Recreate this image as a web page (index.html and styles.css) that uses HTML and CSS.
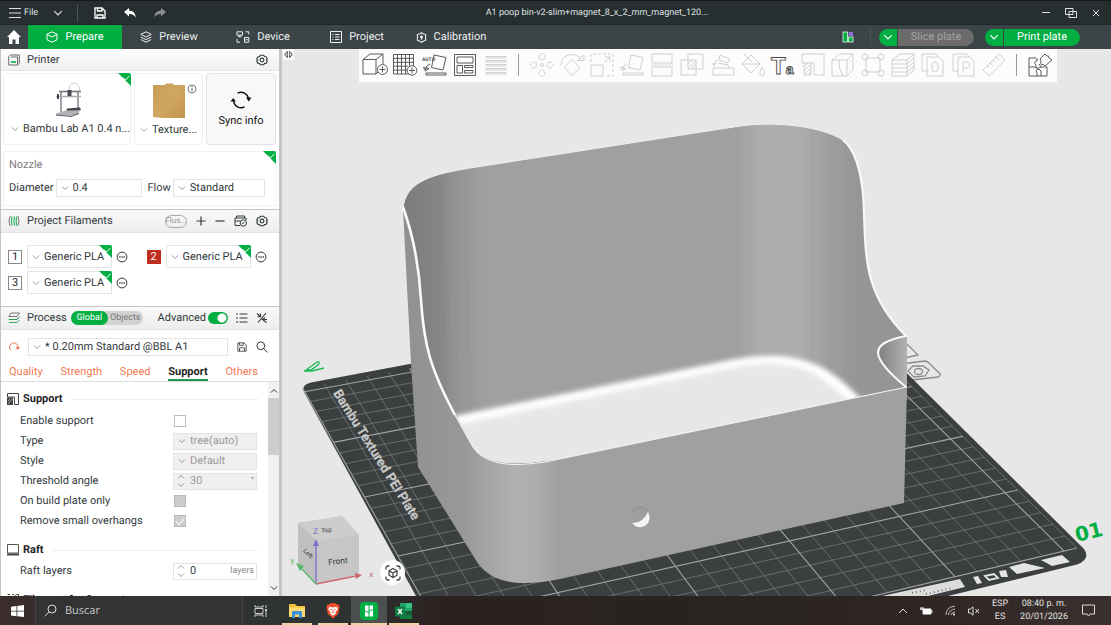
FILE: index.html
```html
<!DOCTYPE html>
<html lang="en">
<head>
<meta charset="utf-8">
<meta name="viewport" content="width=device-width, initial-scale=1">
<title>A1 poop bin</title>
<link rel="stylesheet" href="styles.css">
</head>
<body>
<svg class="defs" aria-hidden="true">
  <symbol id="chev" viewBox="0 0 8 8"><path d="M1 2.500L4 5.500 7 2.500" fill="none" stroke="currentColor"/></symbol>
  <symbol id="chev-up" viewBox="0 0 8 8"><path d="M1 5.500L4 2.500 7 5.500" fill="none" stroke="currentColor"/></symbol>
  <symbol id="gear" viewBox="0 0 12 12"><path d="M4.300 1.300h3.400l.8 1.300 1.600.2 1.200 2.300L10.400 6l.9 1.200-1.300 2.200-1.500.1-.8 1.300H4.300l-.8-1.300L2 9.400.7 7.200 1.600 6 .7 4.900 2 2.700l1.500-.1z" fill="none" stroke="currentColor" stroke-width="1.100"/><circle cx="6" cy="6" r="1.900" fill="none" stroke="currentColor" stroke-width="1.100"/></symbol>
  <symbol id="corner" viewBox="0 0 13 13"><path d="M0 0H11Q13 0 13 2V13Z" fill="#00ae42"/><path d="M5 4.500L7.500 7 11.500 2.800" fill="none" stroke="#fff"/></symbol>
  <symbol id="more" viewBox="0 0 12 12"><circle cx="6" cy="6" r="4.900" fill="none" stroke="currentColor"/><path d="M3.200 6h1.300M5.400 6h1.300M7.600 6h1.300" stroke="currentColor" stroke-width="1.300"/></symbol>
  <symbol id="save" viewBox="0 0 12 12"><path d="M1 1H8.500L11 3.500V11H1ZM3 1V4H7.500V1M3 11V7H9V11" fill="none" stroke="currentColor"/></symbol>
</svg>
<div class="app">
  <header class="titlebar">
    <div class="title-left">
      <button class="file-btn"><svg width="12" height="12" viewBox="0 0 12 12"><path d="M0 1.500H12M0 6H12M0 10.500H12" stroke="currentColor" stroke-width="1.200"/></svg>File</button>
      <button class="bare" aria-label="File menu"><svg width="10" height="10"><use href="#chev"/></svg></button>
      <span class="tsep"></span>
      <button class="bare" aria-label="Save"><svg width="12" height="12" viewBox="0 0 12 12"><path d="M1 1H8L11 4V11H1ZM3.500 1V4H8V1M3 11V8H9V11" fill="none" stroke="#fff" stroke-width="1.300"/></svg></button>
      <button class="bare" aria-label="Undo"><svg width="12" height="10" viewBox="0 0 12 10"><path d="M0 4L5 0V2.500Q11 2.500 12 9.500Q9 5.500 5 6V8.500Z" fill="#fff"/></svg></button>
      <button class="bare" aria-label="Redo"><svg width="12" height="10" viewBox="0 0 12 10"><path d="M12 4L7 0V2.500Q1 2.500 0 9.500Q3 5.500 7 6V8.500Z" fill="#8b9091"/></svg></button>
    </div>
    <div class="doc-title">A1 poop bin-v2-slim+magnet_8_x_2_mm_magnet_120...</div>
    <div class="title-right">
      <button class="bare" aria-label="Minimize"><svg width="8" height="8" viewBox="0 0 8 8"><path d="M0 3.500H8" stroke="currentColor"/></svg></button>
      <button class="bare" aria-label="Restore"><svg width="12" height="10" viewBox="0 0 12 10"><path d="M.5 .5H8V6.500H.5ZM4 3.500H11.500V9.500H4Z" fill="none" stroke="currentColor"/></svg></button>
      <button class="bare" aria-label="Close"><svg width="8" height="8" viewBox="0 0 8 8"><path d="M1 1L7 7M7 1L1 7" stroke="currentColor"/></svg></button>
    </div>
  </header>

  <nav class="tabs">
    <button class="home" aria-label="Home"><svg width="14" height="14" viewBox="0 0 14 14"><path d="M7 0L14 7H12V14H8.500V9.500H5.500V14H2V7H0Z" fill="#fff"/></svg></button>
    <button class="tab active"><svg width="12" height="12" viewBox="0 0 12 12"><path d="M6 .8L11 3.200V8.800L6 11.200 1 8.800V3.200ZM1 3.400L6 6 11 3.400" fill="none" stroke="currentColor"/></svg>Prepare</button>
    <button class="tab"><svg width="12" height="12" viewBox="0 0 12 12"><path d="M6 .8L11.200 3.400 6 6 .8 3.400ZM.8 6L6 8.600 11.200 6M.8 8.500L6 11.200 11.200 8.500" fill="none" stroke="currentColor"/></svg>Preview</button>
    <button class="tab"><svg width="14" height="12" viewBox="0 0 14 12"><path d="M1 .8H6.500V4.200H1ZM3.800 4.200V5.500M2 5.800H5.500M9.500 .8H12.800V3.500M1 8V11.200H4M8.500 6.500H12.800V11.200H8.500ZM9.500 8.800H11.800" fill="none" stroke="currentColor"/></svg>Device</button>
    <button class="tab"><svg width="12" height="12" viewBox="0 0 12 12"><path d="M.5 .5H11.500V11.500H.5ZM2.500 3.500H3.500M5 3.500H9.500M2.500 6H3.500M5 6H9.500M2.500 8.500H3.500M5 8.500H9.500" fill="none" stroke="currentColor"/></svg>Project</button>
    <button class="tab"><svg width="11" height="11" viewBox="0 0 12 12"><path d="M6 .8L7.800 1.900 10.500 2.800 10.400 6 10.500 9 7.800 10.100 6 11.200 4.200 10.100 1.500 9 1.600 6 1.500 2.800 4.200 1.900Z" fill="none" stroke="currentColor" stroke-width="1.200"/><path d="M6 8.500V4.500M4.500 6L6 4.300 7.500 6" fill="none" stroke="currentColor" stroke-width="1.400"/></svg>Calibration</button>
    <div class="tab-actions">
      <button class="bare" aria-label="Layout"><svg width="12" height="12" viewBox="0 0 12 12"><rect x="1" y="1" width="4.500" height="10" fill="#00ae42" stroke="#e9f5ee" stroke-width=".8"/><rect x="6.500" y="1" width="4.500" height="4" fill="#8f6fd0"/><rect x="6.500" y="6" width="4.500" height="5" fill="#00ae42" stroke="#e9f5ee" stroke-width=".8"/></svg></button>
      <span class="tsep"></span>
      <div class="pill"><button aria-label="Slice options"><svg width="10" height="10"><use href="#chev"/></svg></button><button class="wide off">Slice plate</button></div>
      <div class="pill"><button aria-label="Print options"><svg width="10" height="10"><use href="#chev"/></svg></button><button class="wide">Print plate</button></div>
    </div>
  </nav>

  <main class="work">
    <aside class="side">
      <section class="head">
        <svg width="12" height="12" viewBox="0 0 12 12"><path d="M.7 2.500L2.500 1H11.300V9.500L9.500 11H.7ZM3 3H9.500V10.500" fill="none" stroke="#6b6b6b"/><path d="M3 8H8" stroke="#00ae42" stroke-width="1.600"/></svg>
        <h2>Printer</h2>
        <button class="bare end" aria-label="Printer settings"><svg width="12" height="12"><use href="#gear"/></svg></button>
      </section>
      <div class="cards">
        <div class="card">
          <svg class="corner" width="13" height="13"><use href="#corner"/></svg>
          <svg class="thumb" width="30" height="36" viewBox="0 0 30 36"><path d="M15 8Q15 1 20 1T26 9" fill="none" stroke="#c4c4c4" stroke-width=".8"/><path d="M7 9V30M24 9V29" stroke="#a0a0a8" stroke-width="2"/><path d="M5 9.500H27" stroke="#77777e" stroke-width="1.600"/><path d="M2 14.500H27" stroke="#a8a8ae" stroke-width="1.500"/><path d="M13.500 8h4v6h-4zM3 12h2v5H3z" fill="#4a4b53"/><path d="M13 26.500L26 25.500 27 28 12 30Z" fill="#44444c"/><path d="M2 31.500L12 28.500H26L24 32 16 34 2 33.500Z" fill="#b2b2b9"/><path d="M2 33L17 34.500 25 31.500" fill="none" stroke="#66666e" stroke-width="1.200"/></svg>
          <label class="pick"><svg width="8" height="8"><use href="#chev"/></svg><select aria-label="Printer"><option>Bambu Lab A1 0.4 n...</option></select></label>
        </div>
        <div class="card plate">
          <svg class="info" width="10" height="10" viewBox="0 0 10 10"><circle cx="5" cy="5" r="4" fill="none" stroke="#555" stroke-width=".8"/><path d="M5 2.300V3.300M5 4.200V7.500" stroke="#555"/></svg>
          <svg class="thumb" width="32" height="36" viewBox="0 0 32 36"><defs><linearGradient id="pei" x2="1" y2="1"><stop stop-color="#c99d57"/><stop offset=".5" stop-color="#d0a661"/><stop offset="1" stop-color="#c2934c"/></linearGradient></defs><path d="M0 2H12L13 .5H20L21 2H32V35H10L0 34Z" fill="url(#pei)"/></svg>
          <label class="pick"><svg width="8" height="8"><use href="#chev"/></svg><select aria-label="Plate type"><option>Texture...</option></select></label>
        </div>
        <button class="sync"><svg width="22" height="20" viewBox="0 0 22 20"><path d="M3.500 11A7.600 7.600 0 0 0 14.500 16.800M7.500 3.200A7.600 7.600 0 0 1 18.500 9" fill="none" stroke="#111" stroke-width="1.400"/><path d="M.5 11.500L3.200 8 6 11.500ZM16 7.500L18.800 11.500 21.500 7.500Z" fill="#111"/></svg>Sync info</button>
      </div>
      <div class="nozzle">
        <svg class="corner" width="13" height="13"><use href="#corner"/></svg>
        <span class="muted">Nozzle</span>
        <div class="nozzle-row">
          <label for="dia">Diameter</label>
          <div class="pick box"><svg width="8" height="8"><use href="#chev"/></svg><select id="dia"><option>0.4</option></select></div>
          <label for="flow">Flow</label>
          <div class="pick box"><svg width="8" height="8"><use href="#chev"/></svg><select id="flow"><option>Standard</option></select></div>
        </div>
      </div>

      <section class="head ruled">
        <svg width="12" height="12" viewBox="0 0 12 12"><path d="M2 1Q0 6 2 11M10 1Q12 6 10 11" fill="none" stroke="#777"/><path d="M4 1.500Q3 6 4 10.500M6.500 1.500Q5.500 6 6.500 10.500M8.500 1.500Q8 6 8.500 10.500" fill="none" stroke="#36b566" stroke-width="1.200"/></svg>
        <h2>Project Filaments</h2>
        <div class="tools end">
          <button class="flush">Flus...</button>
          <button class="bare" aria-label="Add"><svg width="10" height="10" viewBox="0 0 10 10"><path d="M5 .5V9.500M.5 5H9.500" stroke="currentColor" stroke-width="1.200"/></svg></button>
          <button class="bare" aria-label="Remove"><svg width="10" height="10" viewBox="0 0 10 10"><path d="M.5 5H9.500" stroke="currentColor" stroke-width="1.200"/></svg></button>
          <button class="bare" aria-label="Sync filaments"><svg width="13" height="12" viewBox="0 0 13 12"><path d="M2.500 3V1H10.500V3M1 3H12V5M1 3V10.500H6M1 6H6" fill="none" stroke="currentColor"/><circle cx="9.300" cy="8" r="3.200" fill="none" stroke="currentColor"/><path d="M8 9L10.600 7" stroke="currentColor"/></svg></button>
          <button class="bare" aria-label="Filament settings"><svg width="12" height="12"><use href="#gear"/></svg></button>
        </div>
      </section>
      <div class="filaments">
        <div class="fil"><span class="num">1</span><div class="pick box"><svg width="8" height="8"><use href="#chev"/></svg><select aria-label="Filament 1"><option>Generic PLA</option></select><svg class="corner" width="13" height="13"><use href="#corner"/></svg></div><button class="bare" aria-label="More 1"><svg width="12" height="12"><use href="#more"/></svg></button></div>
        <div class="fil"><span class="num red">2</span><div class="pick box"><svg width="8" height="8"><use href="#chev"/></svg><select aria-label="Filament 2"><option>Generic PLA</option></select><svg class="corner" width="13" height="13"><use href="#corner"/></svg></div><button class="bare" aria-label="More 2"><svg width="12" height="12"><use href="#more"/></svg></button></div>
        <div class="fil"><span class="num">3</span><div class="pick box"><svg width="8" height="8"><use href="#chev"/></svg><select aria-label="Filament 3"><option>Generic PLA</option></select><svg class="corner" width="13" height="13"><use href="#corner"/></svg></div><button class="bare" aria-label="More 3"><svg width="12" height="12"><use href="#more"/></svg></button></div>
      </div>

      <section class="head ruled">
        <svg width="12" height="12" viewBox="0 0 12 12"><path d="M3 1H11.500L9 4.500H.8ZM1.500 7.500H9L11.500 4.500" fill="none" stroke="#666" stroke-width=".9"/><path d="M.8 7.500H9L11 5.500M.8 10.500H9L11.300 8" fill="none" stroke="#1fa552" stroke-width=".9"/></svg>
        <h2>Process</h2>
        <div class="scope"><button class="on">Global</button><button>Objects</button></div>
        <div class="adv end">
          <label for="adv">Advanced</label><input type="checkbox" id="adv" class="switch" checked>
          <button class="bare" aria-label="List"><svg width="12" height="10" viewBox="0 0 12 10"><path d="M0 1H2M3.500 1H11.500M0 5H2M3.500 5H11.500M0 9H2M3.500 9H11.500" stroke="currentColor" stroke-width="1.100"/></svg></button>
          <button class="bare" aria-label="Compare"><svg width="12" height="12" viewBox="0 0 12 12"><path d="M10 1L2 10.500M1 1.500L4.500 4.500M4.500 1.500V4.800H1.500M11 7.500H6.500L9 5.500M6.500 7.500L10.500 10.500" fill="none" stroke="currentColor" stroke-width="1.100"/></svg></button>
        </div>
      </section>
      <div class="preset">
        <button class="bare orange" aria-label="Reset"><svg width="12" height="12" viewBox="0 0 12 12"><path d="M3 9.500A4.300 4.300 0 1 1 10 7" fill="none" stroke="currentColor"/><path d="M7.500 6H12L9.800 9Z" fill="currentColor"/></svg></button>
        <div class="pick box"><svg width="8" height="8"><use href="#chev"/></svg><select aria-label="Process preset"><option>* 0.20mm Standard @BBL A1</option></select></div>
        <button class="bare" aria-label="Save preset"><svg width="10" height="10"><use href="#save"/></svg></button>
        <button class="bare" aria-label="Search"><svg width="12" height="12" viewBox="0 0 12 12"><circle cx="4.800" cy="4.800" r="3.900" fill="none" stroke="currentColor"/><path d="M7.600 7.600L11.500 11.500" stroke="currentColor"/></svg></button>
      </div>
      <nav class="ptabs"><button>Quality</button><button>Strength</button><button>Speed</button><button class="cur">Support</button><button>Others</button></nav>
      <div class="scroller">
        <div class="opts">
          <h3><svg width="12" height="12" viewBox="0 0 12 12"><path d="M.5 .5H11.500V11.500H7.500V4H.5Z" fill="none" stroke="#444"/><path d="M0 4.500H6V12H0Z" fill="#444"/><path d="M1 11L5 6M1 8L3 6" stroke="#bbb" stroke-width=".8"/></svg>Support</h3>
          <div class="opt"><label for="en">Enable support</label><input type="checkbox" id="en" class="chk"></div>
          <div class="opt"><label for="ty">Type</label><div class="pick box dis"><svg width="8" height="8"><use href="#chev"/></svg><select id="ty" disabled><option>tree(auto)</option></select></div></div>
          <div class="opt"><label for="st">Style</label><div class="pick box dis"><svg width="8" height="8"><use href="#chev"/></svg><select id="st" disabled><option>Default</option></select></div></div>
          <div class="opt"><label for="th">Threshold angle</label><div class="spin box dis"><span class="arrows"><svg width="8" height="8"><use href="#chev-up"/></svg><svg width="8" height="8"><use href="#chev"/></svg></span><input type="text" id="th" value="30" disabled><span class="unit">°</span></div></div>
          <div class="opt"><label for="ob">On build plate only</label><input type="checkbox" id="ob" class="chk" disabled></div>
          <div class="opt"><label for="rs">Remove small overhangs</label><input type="checkbox" id="rs" class="chk" checked disabled></div>
          <h3><svg width="12" height="12" viewBox="0 0 12 12"><path d="M.5 .5H11.500V9H.5Z" fill="none" stroke="#555"/><path d="M0 10.500H12" stroke="#444" stroke-width="2"/></svg>Raft</h3>
          <div class="opt"><label for="rl">Raft layers</label><div class="spin box"><span class="arrows"><svg width="8" height="8"><use href="#chev-up"/></svg><svg width="8" height="8"><use href="#chev"/></svg></span><input type="text" id="rl" value="0"><span class="unit">layers</span></div></div>
          <h3><svg width="12" height="12" viewBox="0 0 12 12"><path d="M.5 .5H3M5 .5H7M9 .5H11.500V11H.5Z" fill="none" stroke="#555"/></svg>Filament for Supports</h3>
        </div>
        <div class="bar"><svg width="8" height="8"><use href="#chev-up"/></svg><span class="knob"></span><svg width="8" height="8"><use href="#chev"/></svg></div>
      </div>
    </aside>

    <section class="view">
      <svg class="scene" viewBox="282 49 829 547" preserveAspectRatio="xMidYMid slice">
        <defs>
          <linearGradient id="inner" gradientUnits="userSpaceOnUse" x1="403" x2="907" y1="0" y2="0">
            <stop offset="0" stop-color="#7c7c7c"/><stop offset=".07" stop-color="#858585"/><stop offset=".1" stop-color="#929292"/><stop offset=".16" stop-color="#a0a0a0"/><stop offset=".66" stop-color="#a0a0a0"/><stop offset=".71" stop-color="#adadad"/><stop offset=".78" stop-color="#aeaeae"/><stop offset=".84" stop-color="#a0a0a0"/><stop offset=".9" stop-color="#969696"/><stop offset="1" stop-color="#949494"/>
          </linearGradient>
          <linearGradient id="outer" gradientUnits="userSpaceOnUse" x1="403" x2="907" y1="0" y2="0">
            <stop offset="0" stop-color="#919191"/><stop offset=".12" stop-color="#989898"/><stop offset=".17" stop-color="#a5a5a5"/><stop offset=".22" stop-color="#b0b0b0"/><stop offset=".26" stop-color="#aeaeae"/><stop offset=".31" stop-color="#a0a0a0"/><stop offset="1" stop-color="#a0a0a0"/>
          </linearGradient>
          <linearGradient id="pocket" gradientUnits="userSpaceOnUse" x1="877" x2="907" y1="0" y2="0"><stop offset="0" stop-color="#7d7d7d"/><stop offset="1" stop-color="#b2b2b2"/></linearGradient>
          <filter id="soft" x="-10%" y="-30%" width="120%" height="160%"><feGaussianBlur stdDeviation="2.500"/></filter>
          <clipPath id="room"><path d="M403 209Q404 172 470 168L740 126Q800 118 843 140Q862 155 864 243Q868 295 907 337Q877 341 877 353Q880 363 907 387L582 454Q495 474 475 450L435 377Z"/></clipPath>
        </defs>
        <g fill="none" stroke="#8a8a8a" stroke-width="1.300">
          <path d="M900 343L908 345 918 355 900 359"/><path d="M900 364L925 361Q927 361 929 363L940 374Q941 376 938 377L912 380 904 375"/><path d="M908 371L913 366 923 366 929 370 925 376 914 377Z"/><ellipse cx="918.500" cy="371.500" rx="4" ry="3"/>
        </g>
        <path d="M416 596L304 392Q301 385 311 382.500L820 287 1084 549Q1091 559 1077 564.500L948 596Z" fill="#3b3f3f"/>
        <g id="grid"></g>
        <path d="M1041 560L1062 555 1070 562 1052 566ZM1009 567L1024 563 1045 568 1017 574ZM973 577L978 576 982 583 977 584ZM999 571L1006 570 1008 577 1001 577Z" fill="#e4e4e4"/>
        <path d="M985 576L994 574 998 578 989 580Z" fill="none" stroke="#e4e4e4" stroke-width="1.800"/>
        <path d="M882 596L960 579 965 587 928 596Z" fill="#dcdcdc"/>
        <path d="M912 593L926 590M926 594L952 588" stroke="#777" stroke-dasharray="1 3" stroke-width="2"/>
        <text class="plate-name" transform="translate(333 393) rotate(58)">Bambu Textured PEI Plate</text>
        <text class="plate-no" transform="translate(1077 542) rotate(-14)">01</text>
        <path d="M306 370L317 362Q321 361 318 365L311 370ZM304 371H312L324 368" fill="none" stroke="#1fbb59" stroke-width="1.300"/>

        <path d="M403 209C405 180 436 174 470 168L740 126C775 121 820 126 843 140C858 152 862 180 863.500 200C866 255 862 292 907 337L907 400 540 480 440 440Z" fill="url(#inner)"/>
        <g stroke="#000" stroke-opacity=".03"><path d="M440 178L446 398M452 174L458 414M465 170L470 412M739 128V358M750 126V357M812 131V370M830 137V378M845 145V388"/></g>
        <g clip-path="url(#room)">
          <path d="M430 421L735 359Q790 349 825 369Q842 379 862 400L862 440 440 500Z" fill="#fff" filter="url(#soft)"/>
          <path d="M450 426L735 367Q787 358 816 375Q830 384 850 402L862 440 440 500Z" fill="#e7e7e7" filter="url(#soft)"/>
        </g>
        <path d="M907 337C886 340 877 345 877 353C878 364 895 378 907 387Z" fill="url(#pocket)"/>
        <path d="M403 209C412 232 419 265 421 300C424 345 430 368 455 415L473 447C484 463 505 468 545 462L907 387 904 503 560 579C520 587 492 584 477 562L418 467 411 364Z" fill="url(#outer)"/>
        <path d="M403 209C405 180 436 174 470 168L740 126C775 121 820 126 843 140" fill="none" stroke="#efefef"/>
        <path d="M843 140C858 152 862 180 863.500 200C866 255 862 292 906 336C886 340 878 345 878 353C879 364 895 378 906 387" fill="none" stroke="#f8f8f8" stroke-width="2.200"/>
        <path d="M403 207C412 232 419 265 421 300C424 345 430 368 455 415" fill="none" stroke="#fafafa" stroke-width="2.600"/>
        <path d="M455 415L473 447C484 463 505 468 545 462L907 387" fill="none" stroke="#f2f2f2" stroke-width="1.200"/>
        <circle cx="640" cy="517" r="8" fill="#9e9e9e"/>
        <path d="M648 512A8.300 8.300 0 0 1 632 523Q642 524 648 512Z" fill="#f3f3f3"/><path d="M633 512A8 8 0 0 1 647 511" fill="none" stroke="#868686" stroke-width=".8"/>

        <path d="M298 523L342 516 359 535 359 574 316 584 298 563Z" fill="#c6c6c6"/>
        <path d="M298 523L342 516 359 535 317 541Z" fill="#cdcdcd"/><path d="M298 523L317 541 316 584 298 563Z" fill="#bfbfbf"/>
        <g class="cube">
          <text x="328" y="564" transform="rotate(-6 338 560)">Front</text><text class="face" x="321" y="532" transform="rotate(-4 328 530)">Top</text><text class="face" x="302" y="555" transform="rotate(45 307 554)">Left</text>
        </g>
        <g fill="none" stroke-width="1.300"><path d="M316 584V546" stroke="#7a6fc8"/><path d="M316 584L356 576" stroke="#c8686c"/><path d="M316 584L300 567" stroke="#58b56a"/></g>
        <path d="M313 546L316 539 319 546Z" fill="#7a6fc8"/><path d="M355 573L362 575 356 579Z" fill="#c8686c"/><path d="M296 563L304 566 300 571Z" fill="#58b56a"/>
        <g class="axes"><text x="313" y="534" fill="#7a6fc8">Z</text><text x="369" y="577" fill="#c8686c">x</text><text x="290" y="563" fill="#58b56a">y</text></g>
      </svg>
      <button class="fold" aria-label="Collapse panel"><svg width="9" height="7" viewBox="0 0 8 6"><path d="M3 .5L.7 3 3 5.500ZM5 .5L7.300 3 5 5.500Z" fill="none" stroke="#666" stroke-width=".9"/></svg></button>
      <div class="toolbar">
        <button class="dark" aria-label="Add"><svg viewBox="0 0 26 26"><path d="M1 7.500H14V22H1ZM1 7.500L8 2H21L14 7.500M21 2V12M14 22L16 20"/><circle cx="20.500" cy="17.500" r="5"/><path d="M17.500 17.500H23.500M20.500 14.500V20.500"/></svg></button>
        <button class="dark" aria-label="Add plate"><svg viewBox="0 0 26 26"><path d="M1.500 2.500H21.500V22H1.500ZM5.500 2.500V22M9.500 2.500V22M13.500 2.500V22M17.500 2.500V14M1.500 6.400H21.500M1.500 10.300H21.500M1.500 14.200H16M1.500 18.100H15"/><circle cx="20" cy="18.500" r="4.800" fill="#fcfcfc"/><path d="M17 18.500H23M20 15.500V21.500"/></svg></button>
        <button class="dark" aria-label="Auto orient"><svg viewBox="0 0 26 26"><path d="M12 3L24 5.500 21 18 9.500 15.500ZM8 12Q4 13 3.500 18M1.500 15.500L3.500 19 7 16.500ZM4 21H24V23H4Z"/><text x="0" y="9" class="auto">AUTO</text></svg></button>
        <button class="dark" aria-label="Arrange"><svg viewBox="0 0 26 26"><path d="M2.500 2.500H23.500V23.500H2.500ZM5 5H21V11H5ZM5 13.500H10.500V21H5ZM12.500 13.500H21V15.500H12.500ZM12.500 18.500H21V21H12.500Z"/></svg></button>
        <button aria-label="Layers"><svg viewBox="0 0 26 26"><path d="M3 4.500H23V6H3ZM3 8.500H23V10H3ZM3 12.500H23V14H3ZM3 16.500H23V18H3ZM3 20.500H23V22H3Z"/></svg></button>
        <span class="vsep"></span>
        <button aria-label="Move"><svg viewBox="0 0 26 26"><path d="M13 1L17 5H15V8H11V5H9ZM13 25L17 21H15V18H11V21H9ZM1 13L5 9V11H8V15H5V17ZM25 13L21 9V11H18V15H21V17Z" stroke-dasharray="2 1"/><circle cx="13" cy="13" r="1.500"/></svg></button>
        <button aria-label="Rotate"><svg viewBox="0 0 26 26"><path d="M13 7.500L21 15.500 13 23.500 5 15.500ZM2 14Q2 3 13 2.500Q19 2.500 22 7M18.500 8.500H25V3Z"/></svg></button>
        <button aria-label="Scale"><svg viewBox="0 0 26 26"><path d="M2 13H14V24H2Z"/><path d="M2 10V2H24V24H16" stroke-dasharray="3 2"/><path d="M15 11L20 6M16 5H21V10"/></svg></button>
        <button aria-label="Lay on face"><svg viewBox="0 0 26 26"><path d="M12 3L24 5.500 21 18 9.500 15.500ZM8 12Q4 13 3.500 18M1.500 15.500L3.500 19 7 16.500ZM4 21H24V23H4Z"/></svg></button>
        <button aria-label="Cut"><svg viewBox="0 0 26 26"><path d="M3 2H23V11H3ZM3 15H23V24H3Z"/><path d="M2 13H24" stroke-dasharray="2 1"/></svg></button>
        <button aria-label="Boolean"><svg viewBox="0 0 26 26"><path d="M9 2H24V17H9ZM2 8H17V23H2ZM9 12L13 8M9 16L17 9M12 17L17 12"/></svg></button>
        <button aria-label="Brim"><svg viewBox="0 0 26 26"><path d="M3 16H24V23H3ZM8 11L18 13 19 16M10 3L20 7 18 11 9 8ZM8 8Q4 9 4 13M2 11L4 14 6 11"/></svg></button>
        <button aria-label="Paint"><svg viewBox="0 0 26 26"><path d="M2 12L11 3 20 12 11 21ZM2 12H20M4 2L12 10M22 15Q26 20 24 23Q21 25 20 22Q19 20 22 15Z"/></svg></button>
        <button class="dark" aria-label="Text"><svg viewBox="0 0 26 26"><text x="1" y="22" class="tbig">T<tspan class="tsmall">a</tspan></text></svg></button>
        <button aria-label="Support paint"><svg viewBox="0 0 26 26"><path d="M2 2H24V23H14V11H2ZM4 11V23H11V11M4 15L8 11M4 19L11 12M4 23L11 16M8 23L11 20"/></svg></button>
        <button aria-label="Seam"><svg viewBox="0 0 26 26"><path d="M2 8H17V24H2ZM2 8L9 2H23L17 8M23 2V18L17 24M9 8Q8 16 13 24"/></svg></button>
        <button aria-label="Measure box"><svg viewBox="0 0 26 26"><path d="M6 6H20V20H6Z"/><circle cx="5" cy="5" r="3"/><circle cx="21" cy="5" r="3"/><circle cx="5" cy="21" r="3"/><circle cx="21" cy="21" r="3"/></svg></button>
        <button aria-label="Variable layer"><svg viewBox="0 0 26 26"><path d="M2 8L10 2H24L17 8ZM2 8V24H17V8M24 2V18L17 24M2 12H17L24 6M2 16H17L24 10M2 20H17L24 14"/></svg></button>
        <button aria-label="Object"><svg viewBox="0 0 26 26"><path d="M7 19H2V2H16L18 5M7 5H19L23 9V24H7Z"/><rect x="12" y="10" width="6" height="10" rx="3"/></svg></button>
        <button aria-label="Parts"><svg viewBox="0 0 26 26"><path d="M7 19H2V2H16L18 5M7 5H19L23 9V24H7ZM12 21V10H16Q19 11 19 13T16 16H12"/></svg></button>
        <button aria-label="Measure"><svg viewBox="0 0 26 26"><path d="M2 18L18 2 24 8 8 24ZM6 14L8 16M9 11L12 14M12 8L14 10M15 5L18 8"/></svg></button>
        <span class="vsep"></span>
        <button class="dark" aria-label="Assembly"><svg viewBox="0 0 26 26"><path d="M2 6H9M2 6V14Q3 16 5 15T9 16V13Q7 12 8 10T10 9V6M2 14V24H10V21Q8 19 10 17.500T14 19V24H20V15H14L12 12M10 24H14M14 15Q11 17 9 16M13 7L18 2 20 4Q22 3 22 6L25 8 18 14Q17 12 15 12.500T14 9Z"/></svg></button>
      </div>
      <button class="fit" aria-label="Fit view"><svg width="16" height="16" viewBox="0 0 16 16" fill="none" stroke="#444" stroke-width="1.300"><path d="M1 4.500V3Q1 1 3 1H4.500M11.500 1H13Q15 1 15 3V4.500M15 11.500V13Q15 15 13 15H11.500M4.500 15H3Q1 15 1 13V11.500M8 3.500L12 5.800V10.200L8 12.500 4 10.200V5.800ZM4 5.800L8 8 12 5.800M8 8V12.500"/></svg></button>
    </section>
  </main>

  <footer class="taskbar">
    <button class="start" aria-label="Start"><svg width="13" height="12" viewBox="0 0 13 12"><path d="M0 1.700L5.500 1V5.700H0ZM6.300 .9L13 0V5.700H6.300ZM0 6.500H5.500V11.200L0 10.400ZM6.300 6.500H13V12L6.300 11.200Z" fill="#fff"/></svg></button>
    <label class="find"><svg width="13" height="13" viewBox="0 0 13 13"><circle cx="8" cy="5" r="4" fill="none" stroke="#ddd"/><path d="M5 8L.8 12.300" stroke="#ddd"/></svg><input type="text" placeholder="Buscar" aria-label="Buscar"></label>
    <button class="app-btn" aria-label="Task view"><svg width="14" height="12" viewBox="0 0 14 12"><path d="M1 0V2H9V0M1 12V10H9V12M1 3.500H9V8.500H1ZM12 0V3M12 6V12" fill="none" stroke="#ccc"/><path d="M11 4H13V6H11Z" fill="#ccc"/></svg></button>
    <button class="app-btn run" aria-label="Explorer"><svg width="18" height="16" viewBox="0 0 18 16"><path d="M1 1H7L9 3H17V14H1Z" fill="#f5c13d"/><path d="M1 4.500H17V14H1Z" fill="#ffdc73"/><path d="M4 15V9Q4 8 5 8H13Q14 8 14 9V15H11V11.500H7V15Z" fill="#3d91d8"/></svg></button>
    <button class="app-btn run" aria-label="Brave"><svg width="14" height="16" viewBox="0 0 16 18"><path d="M5 0H11L12.500 1.700 14.500 1.600 15.500 4.500 14 12 8 17.500 2 12 .5 4.500 1.500 1.600 3.500 1.700Z" fill="#f4502a"/><path d="M4 4L8 5 12 4 13.500 7 11 10 11 12 8 14.500 5 12 5 10 2.500 7Z" fill="#fff"/><path d="M5 7L7 7.700M11 7L9 7.700M8 8V10L6.500 11M8 10L9.500 11" stroke="#f4502a" fill="none"/></svg></button>
    <button class="app-btn run active" aria-label="Bambu Studio"><svg width="18" height="18" viewBox="0 0 18 18"><rect width="18" height="18" rx="4" fill="#00ae42"/><path d="M5 3.500H8.500V10L5 8.500ZM9.500 3.500H13V7L9.500 8.500ZM5 9.500L8.500 11V14.500H5ZM9.500 9.500L13 8V14.500H9.500Z" fill="#fff"/></svg></button>
    <button class="app-btn run" aria-label="Excel"><svg width="18" height="16" viewBox="0 0 18 16"><path d="M5 0H17V16H5Z" fill="#21a366"/><path d="M11 0H17V5H11Z" fill="#33c481"/><path d="M5 8H17V16H5Z" fill="#107c41"/><path d="M11 8H17V12H11Z" fill="#185c37"/><rect y="3.500" width="10" height="10" rx="1" fill="#107c41"/><path d="M3 6L7 11M7 6L3 11" stroke="#fff" stroke-width="1.300"/></svg></button>
    <div class="tray">
      <svg width="10" height="8" viewBox="0 0 10 8"><path d="M1 6L5 2 9 6" fill="none" stroke="#ddd"/></svg>
      <svg width="13" height="10" viewBox="0 0 13 10"><path d="M3 3H11V8H3Z" fill="#fff" stroke="#fff"/><path d="M12 4.500V6.500M1 1V4M3 1V3M0 3H4" stroke="#fff"/></svg>
      <svg width="11" height="11" viewBox="0 0 11 11"><path d="M1 10Q1 2 10 1M3.500 10Q4 5 10 4M6 10Q6.500 7.500 10 7" fill="none" stroke="#bbb"/><circle cx="9" cy="9.500" r="1" fill="#fff"/></svg>
      <svg width="12" height="10" viewBox="0 0 12 10"><path d="M.5 3H2.500L5 .8V9.200L2.500 7H.5ZM7.500 3L11 7M11 3L7.500 7" fill="none" stroke="#ddd"/></svg>
      <div class="stack"><span>ESP</span><span>ES</span></div>
      <div class="stack clock"><span>08:40 p. m.</span><span>20/01/2026</span></div>
      <svg class="note" width="13" height="13" viewBox="0 0 13 13"><path d="M.5 1H12.500V10H8L6.500 12 5 10H.5Z" fill="none" stroke="#ddd"/></svg>
    </div>
  </footer>
</div>
<script src="scene.js"></script>
</body>
</html>
```
FILE: styles.css
```css
* { box-sizing: border-box; }
body { margin: 0; font: 11px/14px Roboto, "Noto Sans", sans-serif; color: #333a3d; background: #e7e7e7; text-rendering: geometricPrecision; }
button, input, select { font: inherit; color: inherit; margin: 0; padding: 0; border: 0; background: none; border-radius: 0; outline: 0; text-rendering: inherit; }
button { display: flex; align-items: center; justify-content: center; flex: none; }
svg { display: block; flex: none; }
select { appearance: none; min-width: 0; flex: 1; opacity: 1; }
h2, h3 { margin: 0; font-size: 11px; }
h2 { font-weight: 400; }
.defs { position: absolute; width: 0; height: 0; }
.app { height: 100vh; display: flex; flex-direction: column; overflow: hidden; }

.titlebar { display: flex; align-items: center; height: 24px; background: #262e30; color: #dfe2e2; font-size: 9px; border-top: 1px solid #14191a; flex: none; }
.title-left { display: flex; align-items: center; width: 175px; padding-left: 9px; }
.title-left .bare { width: 30px; }
.file-btn { gap: 3px; margin-right: 5px; }
.title-left .tsep { margin: 0 7px 0 4px; }
.tsep { width: 1px; height: 18px; background: #4b5355; }
.doc-title { flex: 1; text-align: center; white-space: nowrap; overflow: hidden; }
.title-right { display: flex; justify-content: flex-end; align-items: center; width: 92px; gap: 15px; padding-right: 11px; }

.tabs { display: flex; height: 25px; background: #3b4446; color: #eceeee; flex: none; border-top: 1px solid #1f2627; }
.home { width: 28px; }
.tab { width: 94px; gap: 7px; }
.tab.active { background: #00ae42; color: #fff; }
.tab-actions { display: flex; align-items: center; gap: 11px; margin-left: auto; padding-right: 31px; }
.tab-actions .tsep { margin: 0 -3px 0 5px; }
.pill { display: flex; height: 17px; border-radius: 9px; overflow: hidden; gap: 1px; color: #fff; }
.pill button { width: 18px; background: #00ae42; }
.pill .wide { width: 76px; }
.pill .off { background: #6b6b6b; color: #a3a3a3; }

.work { flex: 1; display: flex; min-height: 0; }
.side { width: 282px; flex: none; display: flex; flex-direction: column; background: #fff; border-left: 1px solid #c4c4c4; border-right: 3px solid #c6c6c6; min-height: 0; }
.head { display: flex; align-items: center; height: 22px; padding: 0 11px 0 7px; gap: 7px; background: linear-gradient(#fdfdfd, #f0f0f0); border-bottom: 1px solid #e2e2e2; flex: none; }
.head.ruled { height: 24px; border-top: 1px solid #c4c4c4; background: linear-gradient(#f9f9f9, #ededed); }
.end { margin-left: auto; }
.cards { display: flex; gap: 3px; padding: 2px 3px 6px 2px; flex: none; }
.card { position: relative; width: 128px; height: 72px; border: 1px solid #f0f0f0; border-radius: 4px; display: flex; flex-direction: column; align-items: center; padding: 8px 0 0 7px; }
.card.plate { width: 69px; padding: 9px 0 0 5px; }
.card .pick { width: 100%; margin-top: 4px; }
.thumb { margin-right: 4px; }
.corner { position: absolute; right: -1px; top: -1px; }
.info { position: absolute; right: 5px; top: 10px; }
.sync { flex: 1; flex-direction: column; gap: 4px; background: #f8f8f8; border: 1px solid #e2e2e2; border-radius: 4px; color: #111; }
.pick { display: flex; align-items: center; gap: 4px; min-width: 0; }
.pick > svg:first-child, .arrows { color: #999; }
.box { border: 1px solid #e4e4e4; height: 18px; padding: 0 4px; }
.nozzle { position: relative; margin: 0 3px 3px 2px; border: 1px solid #f0f0f0; padding: 6px 10px 8px 5px; flex: none; }
.muted { color: #7b7b7b; }
.nozzle-row { display: flex; align-items: center; gap: 2px; margin-top: 7px; }
.nozzle-row .box { width: 86px; }
.nozzle-row .box + label { margin-left: 4px; }
.nozzle-row .box:last-child { flex: 1; }
.tools, .adv { display: flex; align-items: center; gap: 9px; }
.flush { width: 22px; height: 13px; border: 1px solid #a9a9a9; border-radius: 7px; color: #999; font-size: 8px; }
.filaments { display: grid; grid-template-columns: 1fr 1fr; gap: 3px 18px; padding: 12px 12px 12px 7px; flex: none; }
.fil { display: flex; align-items: center; gap: 5px; }
.fil .box { position: relative; width: 85px; height: 23px; }
.fil .bare { width: 10px; }
.num { width: 14px; height: 14px; border: 1px solid #888; line-height: 12px; text-align: center; color: #222; flex: none; }
.num.red { background: #c12e1f; border-color: #c12e1f; color: #fff; }
.scope { display: flex; background: #d3d3d3; border-radius: 7px; height: 14px; margin-left: -3px; font-size: 9px; color: #777; }
.scope button { width: 35px; border-radius: 7px; }
.scope .on { background: #00ae42; color: #fff; width: 37px; }
.adv { gap: 8px; }
.adv label { margin-right: -6px; }
.switch { appearance: none; width: 20px; height: 12px; border-radius: 6px; background: radial-gradient(circle at 14px 6px, #fff 4px, #00ae42 5px); }
.preset { display: flex; align-items: center; padding: 8px 11px 0 7px; gap: 8px; flex: none; }
.preset .box { flex: 1; }
.preset button:nth-of-type(2) { margin: 0 1px; }
.orange { color: #f27b55; }
.ptabs { display: flex; justify-content: space-between; padding: 8px 21px 0 8px; border-bottom: 1px solid #dcdcdc; flex: none; color: #f27b55; }
.ptabs button { height: 17px; border-bottom: 2px solid transparent; }
.ptabs .cur { color: #222; font-weight: 700; border-color: #1f9a50; }
.scroller { flex: 1; display: flex; min-height: 0; overflow: hidden; }
.opts { flex: 1; padding: 10px 10px 0 6px; }
.opts h3 { display: flex; align-items: center; gap: 4px; height: 14px; margin-bottom: 5px; color: #1f2426; }
.opts h3::after { content: ""; flex: 1; height: 1px; margin-left: 4px; background: #ededed; }
.opt { display: flex; align-items: center; height: 20px; padding-left: 13px; }
.opt + h3 { margin: 12px 0 4px; }
.opt label { width: 153px; }
.opt .box { width: 84px; height: 17px; }
.dis { background: #f0f0f0; color: #9a9a9a; }
.spin { display: flex; align-items: center; gap: 5px; padding: 0 2px; }
.spin input { flex: 1; min-width: 0; width: 20px; }
.arrows { display: flex; flex-direction: column; padding-left: 1px; }
.unit { font-size: 9px; color: #888; }
.chk { appearance: none; width: 12px; height: 12px; border: 1px solid #b9b9b9; margin: 0 1px; }
.chk:disabled { display: grid; place-items: center; background: #cdcdcd; }
.chk:checked::before { content: ""; width: 7px; height: 4px; margin-bottom: 2px; border: solid #fff; border-width: 0 0 1px 1px; rotate: -45deg; }
.bar { width: 11px; background: #f1f1f1; display: flex; flex-direction: column; align-items: center; padding: 5px 0 4px; color: #333; }
.knob { width: 11px; height: 57px; background: #cdcdcd; margin: 3px 0 auto; }

.view { flex: 1; position: relative; min-width: 0; overflow: hidden; background: #e7e7e7; }
.scene { position: absolute; width: 100%; height: 100%; }
.plate-name { font: 500 13px Roboto, sans-serif; fill: #c9caca; stroke: #c9caca; stroke-width: .4; }
.plate-no { font: bold 20px "DejaVu Sans", sans-serif; fill: #00ae42; }
.cube { font: 8px Inter, sans-serif; fill: #333; }
.face { font-size: 6px; }
.axes { font: 8px Inter, sans-serif; }
.grid-line { stroke: #7d8180; stroke-width: .7; }
.grid-bold { stroke: #a0a3a2; stroke-width: 1.1; }
.fold { position: absolute; left: 1px; top: 0; width: 11px; height: 11px; background: #fafafa; }
.toolbar { position: absolute; left: 77px; right: 54px; top: 0; display: flex; justify-content: space-between; align-items: center; padding: 3px 4px 4px 3px; background: #fcfcfc; }
.toolbar svg { width: 26px; height: 26px; fill: none; stroke: #cbcbcb; stroke-width: .9; }
.toolbar .dark svg { stroke: #4a4a4a; }
.toolbar .auto { font: bold 5px Roboto, sans-serif; fill: #4a4a4a; stroke: none; }
.tbig { font: bold 24px "Liberation Sans", sans-serif; }
.tsmall { font-size: 14px; }
.vsep { width: 12px; height: 22px; background: linear-gradient(#999, #999) center / 1px 100% no-repeat; }
.fit { position: absolute; left: 98px; bottom: 11px; width: 25px; height: 25px; border-radius: 50%; background: #fff; }

.taskbar { display: flex; height: 29px; flex: none; background: linear-gradient(90deg, #3a2d2b 0, #2e3233 23%, #2f3334 30%, #2b2220 40%, #29241f 65%, #302624 85%, #3a302f); color: #e4e4e4; }
.start { width: 35px; }
.find { display: flex; align-items: center; gap: 8px; width: 208px; padding-left: 8px; background: #333; border: 1px solid #444; border-width: 0 1px; }
.find input { flex: 1; min-width: 0; font-family: "Open Sans", sans-serif; }
.find input::placeholder { color: #c8c8c8; opacity: 1; }
.app-btn { width: 36px; }
.run { box-shadow: inset 3px 0 #2f3334, inset -3px 0 #2f3334, inset 0 -2px #f3d3a4; }
.run:last-of-type { box-shadow: inset 0 -2px #f3d3a4; width: 30px; margin-left: 2px; }
.run.active { background: #4c5050; box-shadow: inset 0 -2px #f3d3a4; }
.tray { display: flex; align-items: center; gap: 12px; margin-left: auto; padding-right: 16px; font-size: 9px; line-height: 13px; }
.stack { display: flex; flex-direction: column; align-items: center; }
.note { margin-left: 2px; }
```
FILE: scene.js
```js
// Projects the 256 x 250 mm build plate grid onto the camera view.
const quad = [[474, 690], [1077, 548], [820, 297], [304.7, 391.7]];
const [[x0, y0], [x1, y1], [x2, y2], [x3, y3]] = quad;
const dx1 = x1 - x2, dx2 = x3 - x2, sx = x0 - x1 + x2 - x3;
const dy1 = y1 - y2, dy2 = y3 - y2, sy = y0 - y1 + y2 - y3;
const det = dx1 * dy2 - dx2 * dy1;
const g = (sx * dy2 - dx2 * sy) / det;
const h = (dx1 * sy - sx * dy1) / det;

function project(mx, my) {
  const u = mx / 256, v = my / 250, w = g * u + h * v + 1;
  return [
    ((x1 - x0 + g * x1) * u + (x3 - x0 + h * x3) * v + x0) / w,
    ((y1 - y0 + g * y1) * u + (y3 - y0 + h * y3) * v + y0) / w
  ];
}

const grid = document.getElementById("grid");
function addLine(a, b, bold) {
  const line = document.createElementNS("http://www.w3.org/2000/svg", "line");
  line.setAttribute("x1", a[0]);
  line.setAttribute("y1", a[1]);
  line.setAttribute("x2", b[0]);
  line.setAttribute("y2", b[1]);
  line.setAttribute("class", bold ? "grid-bold" : "grid-line");
  grid.appendChild(line);
}

for (let mm = 0; mm <= 250; mm += 10) {
  addLine(project(mm, 0), project(mm, 254), mm % 50 === 0);
  addLine(project(0, mm), project(256, mm), mm % 50 === 0);
}
addLine(project(256, 0), project(256, 254), false);
```
